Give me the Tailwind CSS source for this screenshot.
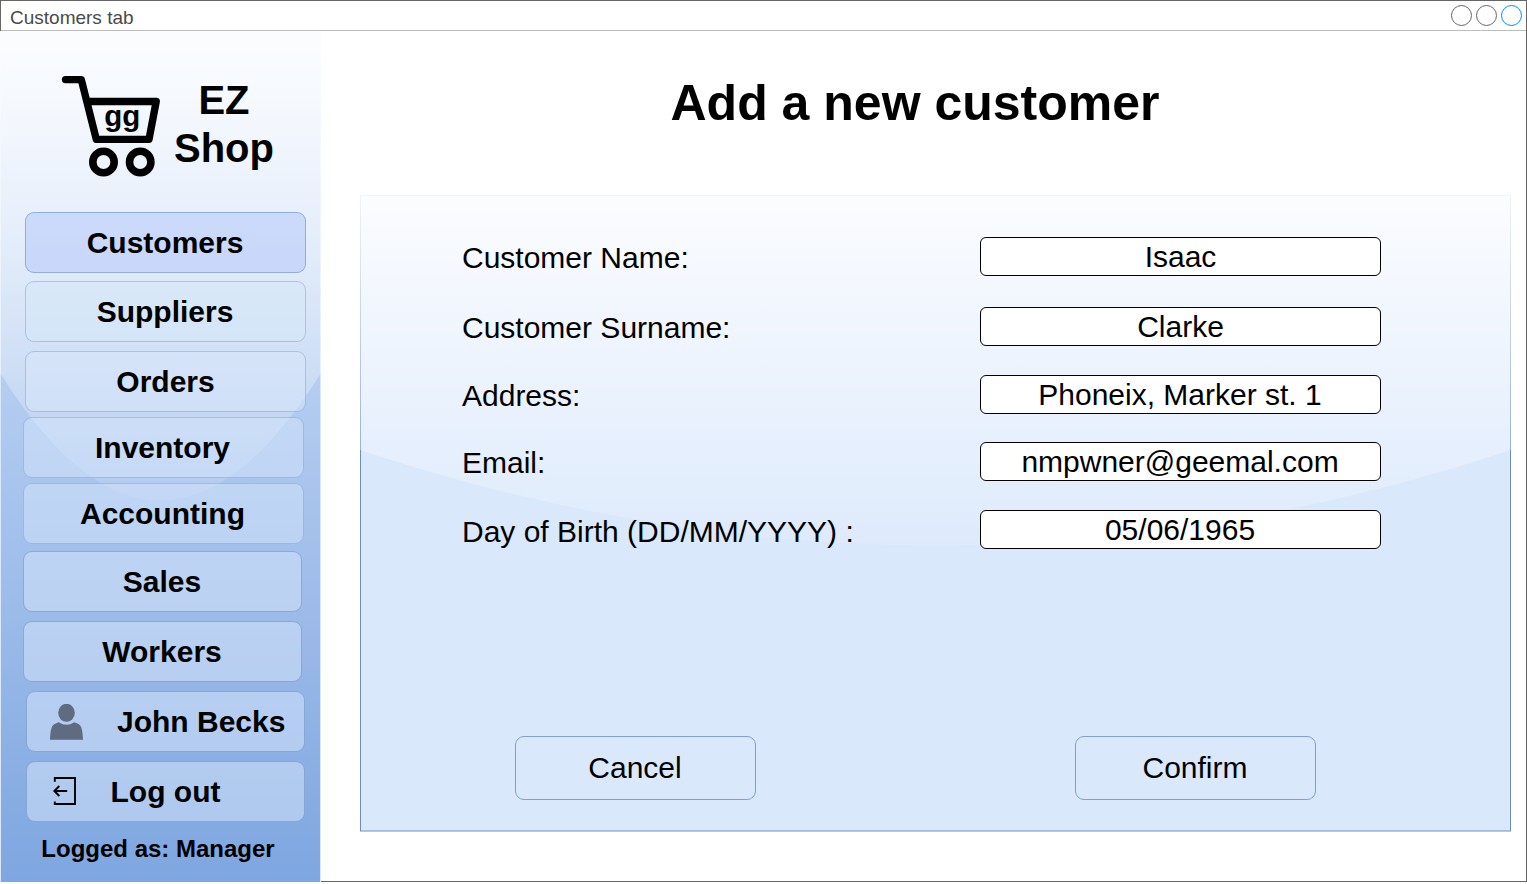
<!DOCTYPE html>
<html lang="en">
<head>
<meta charset="utf-8">
<title>Customers tab</title>
<script src="https://cdn.jsdelivr.net/npm/@tailwindcss/browser@4"></script>
</head>
<body class="bg-white text-black font-['Liberation_Sans',Arial,sans-serif]">
<div class="relative flex h-[882px] w-[1527px] flex-col border border-[#666666] bg-white">
  <header class="flex h-[30px] shrink-0 items-center justify-between border-b border-[#bdbdbd] pl-[9px] pr-1">
    <span class="pt-[5px] text-[19px] leading-[22px] text-[#4a4a4a]">Customers tab</span>
    <div class="flex gap-1">
      <span class="size-[21px] rounded-full border border-[#666666]"></span>
      <span class="size-[21px] rounded-full border border-[#666666]"></span>
      <span class="size-[21px] rounded-full border border-[#008cff]"></span>
    </div>
  </header>

  <div class="flex min-h-0 flex-1">
    <aside class="relative -mb-px -ml-px h-[852px] w-[321px] shrink-0">
      <svg class="absolute inset-0" width="321" height="852" viewBox="0 0 321 852">
        <defs>
          <linearGradient id="side" x1="0" y1="0" x2="0" y2="1"><stop offset="0" stop-color="#dae8fc"/><stop offset="1" stop-color="#7ea6e0"/></linearGradient>
          <linearGradient id="glass" x1="0" y1="0" x2="0" y2="1"><stop offset="0" stop-color="#fff" stop-opacity=".9"/><stop offset="1" stop-color="#fff" stop-opacity=".1"/></linearGradient>
        </defs>
        <rect x=".5" y="0" width="320" height="851.500" fill="url(#side)" stroke="#dae8fc"/>
        <path d="M0 0V342Q160.500 597 321 342V0Z" fill="url(#glass)"/>
      </svg>
      <div class="relative flex h-full flex-col">
        <div class="flex h-[181px] shrink-0">
          <svg class="ml-[55px] h-[181px] w-[115px]" viewBox="55 31 115 181">
            <path d="M65.500 79.600H81.300L96.300 139.400H149L156.200 101.500H88" fill="none" stroke="#000" stroke-width="7.400" stroke-linecap="round" stroke-linejoin="round"/>
            <circle cx="103.500" cy="162" r="10.700" fill="none" stroke="#000" stroke-width="7.600"/>
            <circle cx="140.200" cy="162" r="10.700" fill="none" stroke="#000" stroke-width="7.600"/>
            <text x="122.200" y="126" text-anchor="middle" font-size="29.500" font-weight="bold">gg</text>
          </svg>
          <h2 class="mt-[45px] w-[108px] text-center text-[40px] font-bold leading-[48px]">EZ<br>Shop</h2>
        </div>
        <nav class="flex flex-col text-[30px] font-bold leading-[34px]">
          <a class="ml-[25px] flex h-[61px] w-[281px] items-center justify-center rounded-[9px] border border-[#6c8ebf]/60 bg-[#b9cbfa]/60 pr-px">Customers</a>
          <a class="ml-[25px] mt-2 flex h-[61px] w-[281px] items-center justify-center rounded-[9px] border border-[#6c8ebf]/40 bg-[#d6e7f8]/60 pr-px">Suppliers</a>
          <a class="ml-[25px] mt-[9px] flex h-[61px] w-[281px] items-center justify-center rounded-[9px] border border-[#6c8ebf]/40 bg-[#dae8fc]/50">Orders</a>
          <a class="ml-[23px] mt-[5px] flex h-[61px] w-[281px] items-center justify-center rounded-[9px] border border-[#6c8ebf]/40 bg-[#d6e5fb]/50 pr-0.5">Inventory</a>
          <a class="ml-[23px] mt-[5px] flex h-[61px] w-[281px] items-center justify-center rounded-[9px] border border-[#6c8ebf]/40 bg-[#d6e5fb]/50 pr-0.5">Accounting</a>
          <a class="ml-[23px] mt-[7px] flex h-[61px] w-[279px] items-center justify-center rounded-[9px] border border-[#6c8ebf]/60 bg-[#dae8fc]/50 pr-px">Sales</a>
          <a class="ml-[23px] mt-[9px] flex h-[61px] w-[279px] items-center justify-center rounded-[9px] border border-[#6c8ebf]/60 bg-[#dae8fc]/50 pr-px">Workers</a>
          <a class="ml-[26px] mt-[9px] flex h-[61px] w-[279px] items-center rounded-[9px] border border-[#6c8ebf]/60 bg-[#dae8fc]/50 pl-[23px]">
            <svg class="h-9 w-[33px] text-[#5e6b80]" viewBox="0 0 33 36" fill="currentColor"><ellipse cx="16.500" cy="8.800" rx="8.300" ry="9"/><path d="M0 35.800C.3 27 1.500 21.300 4.500 20L8.800 18.300Q16.500 23.300 24.200 18.300L28.500 20C31.500 21.300 32.700 27 33 35.800Z"/></svg>
            <span class="ml-[34px]">John Becks</span>
          </a>
          <a class="ml-[26px] mt-[9px] flex h-[61px] w-[279px] items-center rounded-[9px] border border-[#6c8ebf]/60 bg-[#dae8fc]/50 pl-[26px]">
            <svg class="mb-0.5 h-7 w-6" viewBox="0 0 24 28" fill="none" stroke="#000" stroke-width="1.900"><path d="M1.800 4.800V1H22V27H1.800V24.500M14.200 14H1.300M6.300 9L1.300 14L6.300 19"/></svg>
            <span class="ml-[33.500px]">Log out</span>
          </a>
        </nav>
        <p class="mt-[13px] pr-[5px] text-center text-[24px] font-bold leading-[28px]">Logged as: Manager</p>
      </div>
    </aside>

    <main class="flex flex-1 flex-col pl-[39px]">
      <h1 class="mt-[44px] h-[56px] w-[1110px] text-center text-[50px] font-bold leading-[57px]">Add a new customer</h1>
      <section class="relative mt-[64px] h-[637px] w-[1151px]">
        <svg class="absolute inset-0" width="1151" height="637" viewBox="0 0 1151 637">
          <rect x=".5" y=".5" width="1150" height="635.500" fill="#dae8fc" stroke="#6c8ebf"/>
          <path d="M0 0V255Q575.500 446 1151 255V0Z" fill="url(#glass)"/>
        </svg>
        <div class="relative flex h-full flex-col text-[30px] leading-[34px]">
          <div class="mt-[42px] flex h-[40px] pl-[102px]"><label class="w-[518px] pt-1">Customer Name:</label><div class="flex h-[39px] w-[401px] items-center justify-center rounded-[6px] border border-black bg-white">Isaac</div></div>
          <div class="mt-[30px] flex h-[40px] pl-[102px]"><label class="w-[518px] pt-1">Customer Surname:</label><div class="flex h-[39px] w-[401px] items-center justify-center rounded-[6px] border border-black bg-white">Clarke</div></div>
          <div class="mt-[28px] flex h-[40px] pl-[102px]"><label class="w-[518px] pt-1">Address:</label><div class="flex h-[39px] w-[401px] items-center justify-center rounded-[6px] border border-black bg-white pr-px">Phoneix, Marker st. 1</div></div>
          <div class="mt-[27px] flex h-[40px] pl-[102px]"><label class="w-[518px] pt-1">Email:</label><div class="flex h-[39px] w-[401px] items-center justify-center rounded-[6px] border border-black bg-white pr-px">nmpwner@geemal.com</div></div>
          <div class="mt-[28px] flex h-[40px] pl-[102px]"><label class="w-[518px] pt-[5px]">Day of Birth (DD/MM/YYYY) :</label><div class="flex h-[39px] w-[401px] items-center justify-center rounded-[6px] border border-black bg-white pr-px">05/06/1965</div></div>
          <div class="mt-[186px] flex gap-[319px] pl-[155px]">
            <button class="h-[64px] w-[241px] rounded-[9px] border border-[#7f9fd0] bg-[#dae8fc] pr-px">Cancel</button>
            <button class="h-[64px] w-[241px] rounded-[9px] border border-[#7f9fd0] bg-[#dae8fc] pr-px">Confirm</button>
          </div>
        </div>
      </section>
    </main>
  </div>
</div>
</body>
</html>
